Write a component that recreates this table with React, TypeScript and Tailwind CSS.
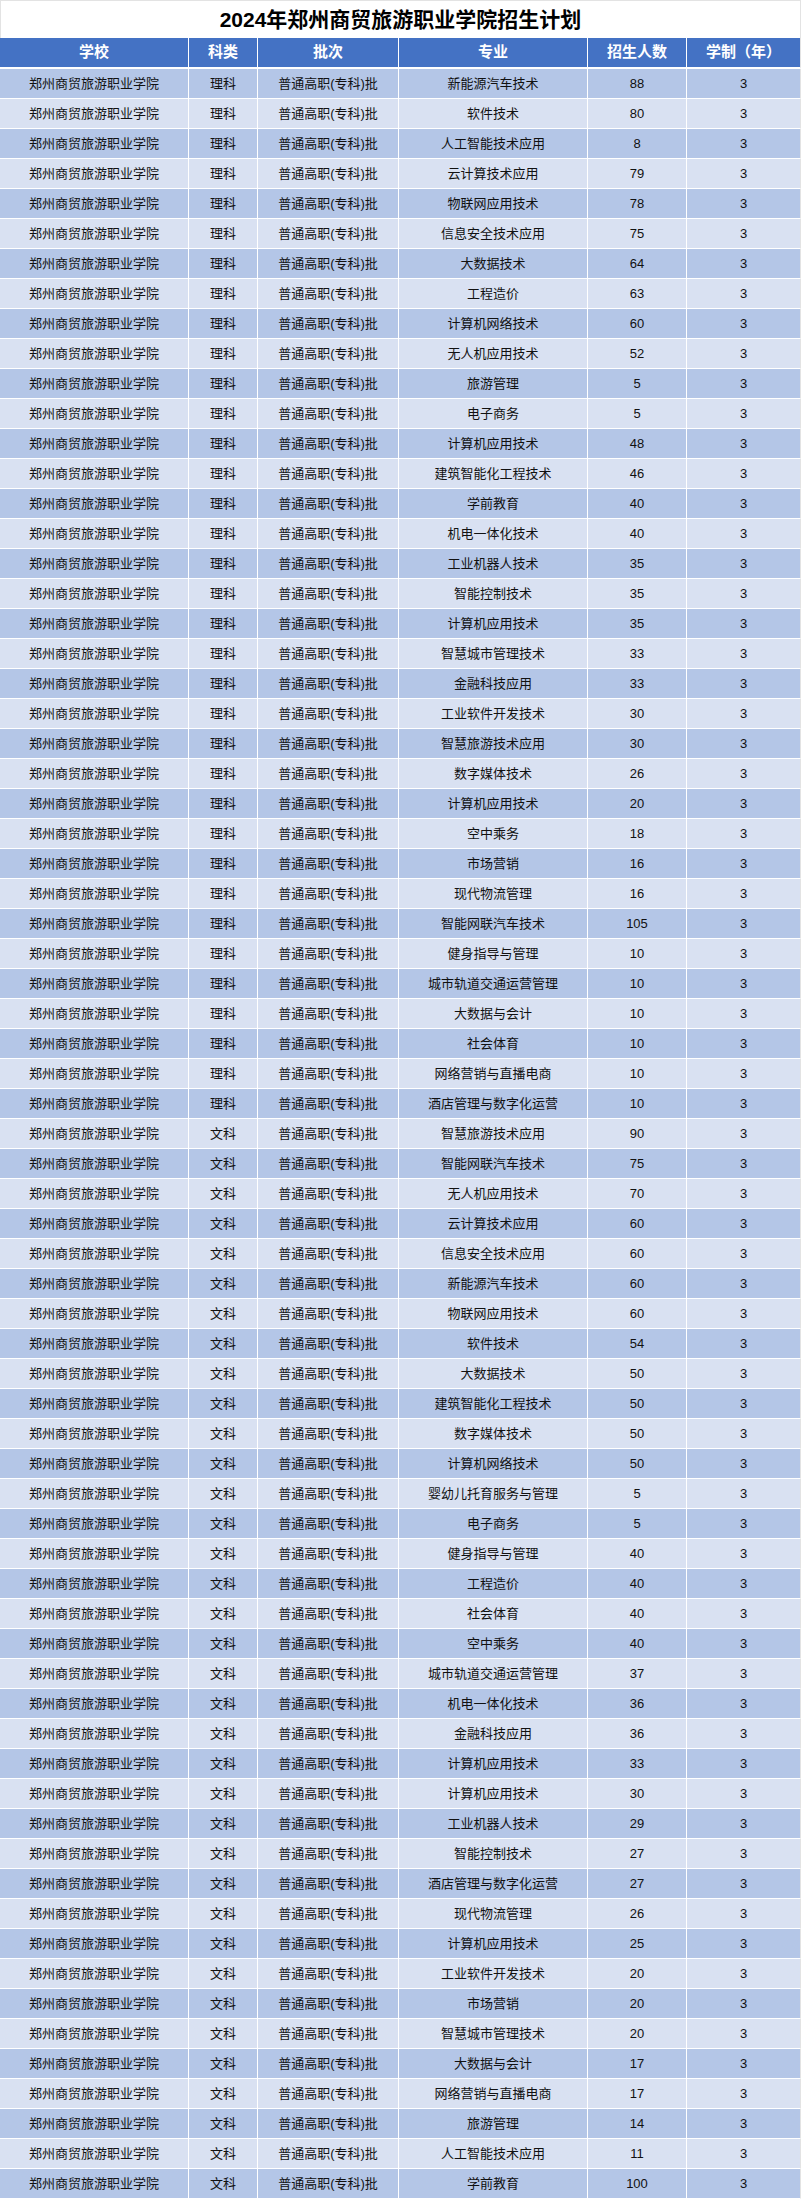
const ROWS: [string, string, number][] = [
  ['理科', '新能源汽车技术', 88],
  ['理科', '软件技术', 80],
  ['理科', '人工智能技术应用', 8],
  ['理科', '云计算技术应用', 79],
  ['理科', '物联网应用技术', 78],
  ['理科', '信息安全技术应用', 75],
  ['理科', '大数据技术', 64],
  ['理科', '工程造价', 63],
  ['理科', '计算机网络技术', 60],
  ['理科', '无人机应用技术', 52],
  ['理科', '旅游管理', 5],
  ['理科', '电子商务', 5],
  ['理科', '计算机应用技术', 48],
  ['理科', '建筑智能化工程技术', 46],
  ['理科', '学前教育', 40],
  ['理科', '机电一体化技术', 40],
  ['理科', '工业机器人技术', 35],
  ['理科', '智能控制技术', 35],
  ['理科', '计算机应用技术', 35],
  ['理科', '智慧城市管理技术', 33],
  ['理科', '金融科技应用', 33],
  ['理科', '工业软件开发技术', 30],
  ['理科', '智慧旅游技术应用', 30],
  ['理科', '数字媒体技术', 26],
  ['理科', '计算机应用技术', 20],
  ['理科', '空中乘务', 18],
  ['理科', '市场营销', 16],
  ['理科', '现代物流管理', 16],
  ['理科', '智能网联汽车技术', 105],
  ['理科', '健身指导与管理', 10],
  ['理科', '城市轨道交通运营管理', 10],
  ['理科', '大数据与会计', 10],
  ['理科', '社会体育', 10],
  ['理科', '网络营销与直播电商', 10],
  ['理科', '酒店管理与数字化运营', 10],
  ['文科', '智慧旅游技术应用', 90],
  ['文科', '智能网联汽车技术', 75],
  ['文科', '无人机应用技术', 70],
  ['文科', '云计算技术应用', 60],
  ['文科', '信息安全技术应用', 60],
  ['文科', '新能源汽车技术', 60],
  ['文科', '物联网应用技术', 60],
  ['文科', '软件技术', 54],
  ['文科', '大数据技术', 50],
  ['文科', '建筑智能化工程技术', 50],
  ['文科', '数字媒体技术', 50],
  ['文科', '计算机网络技术', 50],
  ['文科', '婴幼儿托育服务与管理', 5],
  ['文科', '电子商务', 5],
  ['文科', '健身指导与管理', 40],
  ['文科', '工程造价', 40],
  ['文科', '社会体育', 40],
  ['文科', '空中乘务', 40],
  ['文科', '城市轨道交通运营管理', 37],
  ['文科', '机电一体化技术', 36],
  ['文科', '金融科技应用', 36],
  ['文科', '计算机应用技术', 33],
  ['文科', '计算机应用技术', 30],
  ['文科', '工业机器人技术', 29],
  ['文科', '智能控制技术', 27],
  ['文科', '酒店管理与数字化运营', 27],
  ['文科', '现代物流管理', 26],
  ['文科', '计算机应用技术', 25],
  ['文科', '工业软件开发技术', 20],
  ['文科', '市场营销', 20],
  ['文科', '智慧城市管理技术', 20],
  ['文科', '大数据与会计', 17],
  ['文科', '网络营销与直播电商', 17],
  ['文科', '旅游管理', 14],
  ['文科', '人工智能技术应用', 11],
  ['文科', '学前教育', 100],
]

const HEADERS = ['学校', '科类', '批次', '专业', '招生人数', '学制（年）']

// column widths incl. the 1px white divider; the row's gray right edge takes the last px
const GRID = 'grid grid-cols-[189px_69px_141px_189px_99px_113px]'

export default function App() {
  return (
    <div
      className="w-[801px] bg-white"
      style={{ fontFamily: '"Liberation Sans", "Noto Sans CJK SC", sans-serif' }}
    >
      <div className="flex h-[38px] items-center justify-center border-x border-t border-[#e3e3e3] text-[21px] font-bold text-black">
        2024年郑州商贸旅游职业学院招生计划
      </div>

      <div className={`${GRID} h-[31px] border-b-2 border-white border-r border-r-[#e3e3e3]`}>
        {HEADERS.map((h, i) => (
          <div
            key={h}
            className={`flex items-center justify-center bg-[#4472c4] text-[15px] font-bold text-white ${
              i < HEADERS.length - 1 ? 'border-r border-white' : ''
            }`}
          >
            {h}
          </div>
        ))}
      </div>

      {ROWS.map(([kind, major, count], r) => {
        const bg = r % 2 === 0 ? 'bg-[#b4c6e7]' : 'bg-[#d9e1f2]'
        const cells = ['郑州商贸旅游职业学院', kind, '普通高职(专科)批', major, String(count), '3']
        return (
          <div key={r} className={`${GRID} h-[30px] border-b border-white border-r border-r-[#e3e3e3]`}>
            {cells.map((c, i) => (
              <div
                key={i}
                className={`flex items-center justify-center ${bg} text-[13px] text-[#111] ${
                  i < cells.length - 1 ? 'border-r border-white' : ''
                }`}
              >
                {c}
              </div>
            ))}
          </div>
        )
      })}
    </div>
  )
}
